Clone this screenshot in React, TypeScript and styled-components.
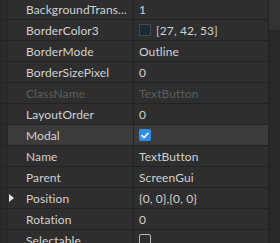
import { FC } from 'react';
import styled, { createGlobalStyle } from 'styled-components';

const GlobalStyle = createGlobalStyle`
  html, body {
    margin: 0;
    padding: 0;
    background: #2e2e2e;
    overflow: hidden;
  }
`;

const Panel = styled.div`
  display: flex;
  width: 280px;
  height: 243px;
  overflow: hidden;
  background: #2e2e2e;
  font-family: Lato, 'Open Sans', sans-serif;
  font-size: 12px;
  letter-spacing: 0.1px;
  color: #d2d2d2;
`;

const List = styled.div`
  display: flex;
  flex-direction: column;
  width: 268px;
  margin-top: -1px;
  border-right: 1px solid #232323;
`;

const Scrollbar = styled.div`
  display: flex;
  flex-direction: column;
  flex: 1;
  background: #282828;
`;

const Thumb = styled.div`
  height: 30px;
  background: #333333;
`;

const Row = styled.div<{ $active?: boolean }>`
  display: grid;
  grid-template-columns: 8px 126px 1fr;
  flex-shrink: 0;
  height: 20px;
  border-bottom: 1px solid #232323;
  background: ${(p) => (p.$active ? '#3b3b3b' : '#2e2e2e')};
`;

const Gutter = styled.div`
  display: flex;
  align-items: center;
  background: #2a2a2a;
  border-right: 1px solid #262626;
`;

const NameCell = styled.div<{ $dim?: boolean }>`
  display: flex;
  align-items: center;
  padding-left: 18px;
  border-right: 1px solid #232323;
  white-space: nowrap;
  overflow: hidden;
  color: ${(p) => (p.$dim ? '#5e5e5e' : '#d2d2d2')};
  position: relative;
`;

const Arrow = styled.span`
  position: absolute;
  left: 1px;
  top: 6px;
  width: 0;
  height: 0;
  border-top: 4px solid transparent;
  border-bottom: 4px solid transparent;
  border-left: 5px solid #e6e6e6;
`;

const ValueCell = styled.div<{ $dim?: boolean }>`
  display: flex;
  align-items: center;
  gap: 5px;
  padding-left: 5px;
  white-space: nowrap;
  color: ${(p) => (p.$dim ? '#5e5e5e' : '#d2d2d2')};
`;

const Swatch = styled.span`
  width: 10px;
  height: 10px;
  background: #1b2a35;
  border: 1px solid #4a4a4a;
`;

const Check = styled.span<{ $checked?: boolean }>`
  display: flex;
  align-items: center;
  justify-content: center;
  box-sizing: border-box;
  width: 12px;
  height: 12px;
  border-radius: 2px;
  background: ${(p) => (p.$checked ? '#2f8ee8' : 'transparent')};
  border: ${(p) => (p.$checked ? 'none' : '1px solid #b8b8b8')};
`;

interface IProp {
  name: string;
  value?: string;
  dim?: boolean;
  active?: boolean;
  expand?: boolean;
  swatch?: boolean;
  check?: 'on' | 'off';
}

const PROPS: IProp[] = [
  { name: 'BackgroundTrans...', value: '1' },
  { name: 'BorderColor3', value: '[27, 42, 53]', swatch: true },
  { name: 'BorderMode', value: 'Outline' },
  { name: 'BorderSizePixel', value: '0' },
  { name: 'ClassName', value: 'TextButton', dim: true },
  { name: 'LayoutOrder', value: '0' },
  { name: 'Modal', check: 'on', active: true },
  { name: 'Name', value: 'TextButton' },
  { name: 'Parent', value: 'ScreenGui' },
  { name: 'Position', value: '{0, 0},{0, 0}', expand: true },
  { name: 'Rotation', value: '0' },
  { name: 'Selectable', check: 'off' },
];

const CheckMark: FC = () => (
  <svg width='8' height='7' viewBox='0 0 8 7'>
    <path d='M1 3.6 L3.1 5.6 L7 1.3' fill='none' stroke='#fff' strokeWidth='1.6' strokeLinecap='round' strokeLinejoin='round' />
  </svg>
);

const App: FC = () => {
  return (
    <Panel>
      <GlobalStyle />
      <List>
        {PROPS.map((p) => (
          <Row key={p.name} $active={p.active}>
            <Gutter />
            <NameCell $dim={p.dim}>
              {p.expand && <Arrow />}
              {p.name}
            </NameCell>
            <ValueCell $dim={p.dim}>
              {p.swatch && <Swatch />}
              {p.check && (
                <Check $checked={p.check === 'on'}>{p.check === 'on' && <CheckMark />}</Check>
              )}
              {p.value}
            </ValueCell>
          </Row>
        ))}
      </List>
      <Scrollbar>
        <Thumb />
      </Scrollbar>
    </Panel>
  );
};

export default App;
